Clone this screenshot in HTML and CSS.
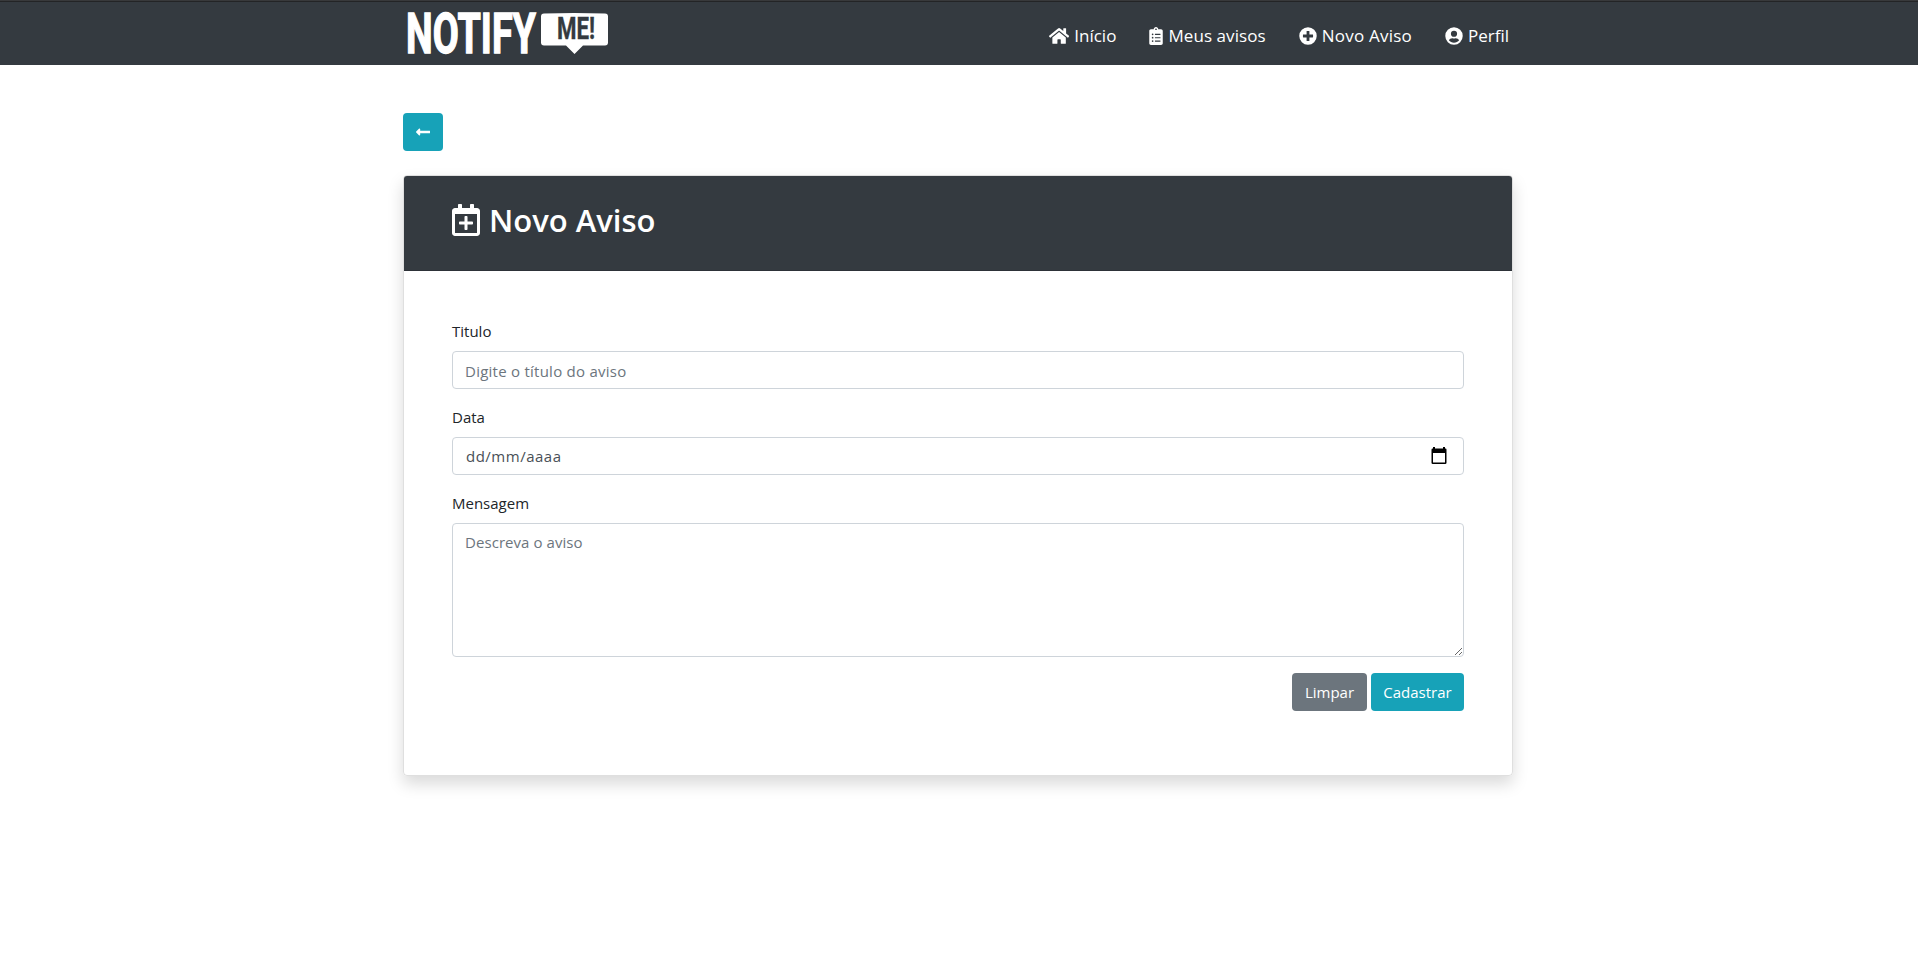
FILE: index.html
```html
<!DOCTYPE html>
<html lang="pt-br">
<head>
<meta charset="utf-8">
<title>Notify Me! - Novo Aviso</title>
<link rel="stylesheet" href="styles.css">
</head>
<body>
<header class="navbar">
  <div class="container navbar-inner">
    <a class="brand" href="#">
      <svg class="logo" width="206" height="65" viewBox="0 0 206 65" role="img" aria-label="Notify Me!">
        <text class="logo-text" x="3" y="53" textLength="130" lengthAdjust="spacingAndGlyphs">NOTIFY</text>
        <path fill="#fff" d="M141 13.500q30-1 61 0 3 0 3 3v26q0 3-3 3h-22l-8.500 8.500-8.500-8.500h-22q-3 0-3-3v-26q0-3 3-3z"/>
        <text class="logo-small" x="154" y="39" textLength="38" lengthAdjust="spacingAndGlyphs">ME!</text>
      </svg>
    </a>
    <nav class="nav">
      <a class="nav-link" href="#">
        <svg class="icon" viewBox="0 0 576 512" width="20.2" height="18"><path d="M280.4 148.3 96 300.1V464a16 16 0 0 0 16 16l112-.3a16 16 0 0 0 16-16V368a16 16 0 0 1 16-16h64a16 16 0 0 1 16 16v95.6a16 16 0 0 0 16 16l112 .3a16 16 0 0 0 16-16V300L295.7 148.300a12.200 12.200 0 0 0-15.300 0zM571.600 251.500 488 182.600V44a12 12 0 0 0-12-12h-56a12 12 0 0 0-12 12v72.600L318.500 43a48 48 0 0 0-61 0L4.300 251.500a12 12 0 0 0-1.600 16.900l25.500 31a12 12 0 0 0 16.900 1.600l235.200-193.700a12.200 12.200 0 0 1 15.300 0l235.200 193.700a12 12 0 0 0 16.900-1.600l25.500-31a12 12 0 0 0-1.700-16.900z"/></svg>
        <span class="t-inicio">Início</span></a>
      <a class="nav-link" href="#">
        <svg class="icon" viewBox="0 0 384 512" width="14" height="18"><path fill-rule="evenodd" d="M336 64h-80c0-35.300-28.700-64-64-64s-64 28.700-64 64H48C21.500 64 0 85.500 0 112v352c0 26.500 21.500 48 48 48h288c26.500 0 48-21.500 48-48V112c0-26.500-21.500-48-48-48zM96 424a24 24 0 1 1 0-48 24 24 0 0 1 0 48zm0-96a24 24 0 1 1 0-48 24 24 0 0 1 0 48zm0-96a24 24 0 1 1 0-48 24 24 0 0 1 0 48zm96-192a24 24 0 1 1 0 48 24 24 0 0 1 0-48zm128 368a8 8 0 0 1-8 8H168a8 8 0 0 1-8-8v-16a8 8 0 0 1 8-8h144a8 8 0 0 1 8 8zm0-96a8 8 0 0 1-8 8H168a8 8 0 0 1-8-8v-16a8 8 0 0 1 8-8h144a8 8 0 0 1 8 8zm0-96a8 8 0 0 1-8 8H168a8 8 0 0 1-8-8v-16a8 8 0 0 1 8-8h144a8 8 0 0 1 8 8z"/></svg>
        <span class="t-meus">Meus avisos</span></a>
      <a class="nav-link" href="#">
        <svg class="icon" viewBox="0 0 512 512" width="18" height="18"><path fill-rule="evenodd" d="M256 8a248 248 0 1 0 0 496 248 248 0 0 0 0-496zm144 276c0 6.600-5.400 12-12 12h-92v92c0 6.600-5.400 12-12 12h-56c-6.600 0-12-5.400-12-12v-92h-92c-6.600 0-12-5.400-12-12v-56c0-6.600 5.400-12 12-12h92v-92c0-6.600 5.400-12 12-12h56c6.600 0 12 5.400 12 12v92h92c6.600 0 12 5.400 12 12z"/></svg>
        <span class="t-novo">Novo Aviso</span></a>
      <a class="nav-link" href="#">
        <svg class="icon" viewBox="0 0 496 512" width="18" height="18"><path fill-rule="evenodd" d="M248 8a248 248 0 1 0 0 496 248 248 0 0 0 0-496zm0 96a88 88 0 1 1 0 176 88 88 0 0 1 0-176zm0 344c-58.700 0-111.300-26.600-146.500-68.200C120.300 344.400 157.100 320 200 320c2.400 0 4.800.4 7.100 1.100a132 132 0 0 0 40.900 6.900c14.300 0 28-2.600 40.900-6.900 2.300-.7 4.700-1.100 7.100-1.100 42.900 0 79.700 24.400 98.500 59.800C359.300 421.400 306.700 448 248 448z"/></svg>
        <span class="t-perfil">Perfil</span></a>
    </nav>
  </div>
</header>
<main class="container main">
  <a class="btn btn-info btn-back" href="#" aria-label="Voltar">
    <svg class="icon" viewBox="0 0 448 512" width="14" height="16"><path d="M134.100 296H436c6.600 0 12-5.400 12-12v-56c0-6.600-5.400-12-12-12H134.100v-46.100c0-21.400-25.900-32.100-41-17L7 239c-9.400 9.400-9.400 24.600 0 34l86.100 86.100c15.100 15.100 41 4.400 41-17z"/></svg>
  </a>
  <section class="card">
    <div class="card-header">
      <svg class="icon" viewBox="0 0 448 512" width="28" height="32"><path fill-rule="evenodd" d="M336 292v24c0 6.600-5.400 12-12 12h-76v76c0 6.600-5.400 12-12 12h-24c-6.600 0-12-5.400-12-12v-76h-76c-6.600 0-12-5.400-12-12v-24c0-6.600 5.400-12 12-12h76v-76c0-6.600 5.400-12 12-12h24c6.600 0 12 5.400 12 12v76h76c6.600 0 12 5.400 12 12zm112-180v352c0 26.500-21.500 48-48 48H48c-26.500 0-48-21.500-48-48V112c0-26.500 21.500-48 48-48h48V12c0-6.600 5.400-12 12-12h40c6.600 0 12 5.400 12 12v52h128V12c0-6.600 5.400-12 12-12h40c6.600 0 12 5.400 12 12v52h48c26.500 0 48 21.500 48 48zm-48 346V160H48v298c0 3.300 2.700 6 6 6h340c3.300 0 6-2.700 6-6z"/></svg>
      <h2 class="title">Novo Aviso</h2>
    </div>
    <form class="card-body">
      <div class="form-group">
        <label class="label" for="titulo">Titulo</label>
        <input class="control text-input" id="titulo" type="text" placeholder="Digite o título do aviso">
      </div>
      <div class="form-group">
        <label class="label" for="data">Data</label>
        <div class="control date">
          <span class="t-date" id="data">dd/mm/aaaa</span>
          <svg class="date-icon" width="16" height="18" viewBox="0 0 16 18"><path fill-rule="evenodd" d="M2 0h2v1.500h8V0h2v1.500h.5Q15.500 1.500 15.500 2.800V15.700Q15.500 17 14.200 17H1.800Q.5 17 .5 15.700V2.800Q.5 1.500 1.700 1.500H2zM2 6v9.500h12V6z"/></svg>
        </div>
      </div>
      <div class="form-group">
        <label class="label" for="mensagem">Mensagem</label>
        <textarea class="control area" id="mensagem" placeholder="Descreva o aviso"></textarea>
      </div>
      <div class="actions">
        <button class="btn btn-secondary" type="reset">Limpar</button>
        <button class="btn btn-info btn-save" type="button">Cadastrar</button>
      </div>
    </form>
  </section>
</main>
</body>
</html>
```
FILE: styles.css
```css
* { box-sizing: border-box; }
body {
  margin: 0;
  min-height: 968px;
  background: #fff;
  color: #212529;
  font: 15px/24px "Open Sans", "Noto Sans", sans-serif;
}
.container { width: 1110px; margin-left: 403px; }
.icon { fill: currentColor; flex: none; display: block; }

.navbar {
  height: 65px;
  background: linear-gradient(#38393b 0 1px, #232426 1px 2px, #343a40 2px);
}
.navbar-inner { height: 65px; display: flex; justify-content: space-between; align-items: center; }
.brand { display: block; height: 65px; }
.logo { display: block; overflow: visible; }
.logo-text { font: bold 56px "Roboto", sans-serif; fill: #fff; stroke: #fff; stroke-width: 1.4px; }
.logo-small { font: bold 31px "Roboto", sans-serif; fill: #343a40; stroke: #343a40; stroke-width: .4px; }
.nav { display: flex; gap: 33px; padding: 6px 4px 0 0; }
.nav-link {
  display: flex;
  align-items: center;
  gap: 5px;
  color: #fff;
  text-decoration: none;
  font-size: 17px;
  white-space: nowrap;
}
.t-meus { letter-spacing: .08px; }
.t-novo { letter-spacing: .22px; }

.main { padding-top: 48px; }
.btn {
  display: flex;
  align-items: center;
  justify-content: center;
  height: 38px;
  padding: 0;
  border: 0;
  border-radius: 4px;
  color: #fff;
  font: 15px/24px "Open Sans", "Noto Sans", sans-serif;
}
.btn-info { background: #17a2b8; }
.btn-secondary { background: #6c757d; width: 75px; }
.btn-back { width: 40px; }
.btn-save { width: 93px; }

.card {
  margin-top: 24px;
  height: 601px;
  border: 1px solid rgba(0, 0, 0, .125);
  border-radius: 4px;
  box-shadow: 0 8px 16px rgba(0, 0, 0, .15);
}
.card-header {
  display: flex;
  gap: 9px;
  height: 95px;
  padding: 28px 48px 0;
  background: #343a40;
  border-bottom: 1px solid #2d3238;
  border-radius: 3px 3px 0 0;
  color: #fff;
}
.title { margin: -2px 0 0; font-size: 31px; line-height: 36px; font-weight: 600; }
.card-body { padding: 48px; }
.form-group { margin-bottom: 16px; }
.label { display: block; width: max-content; margin-bottom: 8px; }
.control {
  display: block;
  width: 100%;
  height: 38px;
  padding: 6px 12px;
  border: 1px solid #ced4da;
  border-radius: 4px;
  background: #fff;
  color: #495057;
  font: 15px/24px "Open Sans", "Noto Sans", sans-serif;
}
.control::placeholder { color: #6c757d; opacity: 1; }
.text-input { letter-spacing: .25px; padding: 8px 12px 6px; }
.date { display: flex; justify-content: space-between; padding: 6px 16px 6px 13px; }
.t-date { letter-spacing: .5px; }
.date-icon { margin-top: 3px; }
.area { height: 134px; resize: vertical; letter-spacing: .06px; }
.actions { display: flex; justify-content: flex-end; gap: 4px; }
```
